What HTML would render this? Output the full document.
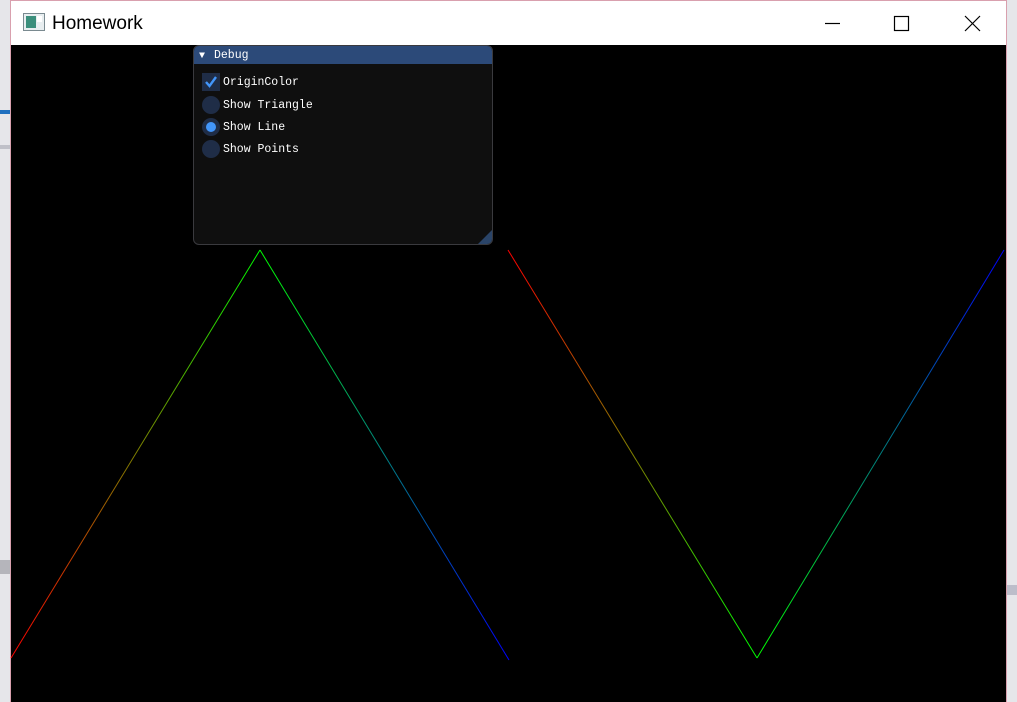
<!DOCTYPE html>
<html><head><style>
html,body{margin:0;padding:0;width:1017px;height:701px;overflow:hidden;background:#e6e6ea;font-family:"Liberation Sans",sans-serif}
.win{position:absolute;left:10px;top:0;width:995px;height:701px;border-left:1px solid #d9a0ae;border-right:1px solid #d9a0ae;border-top:1px solid #d9a0ae;background:#000}
.title{position:absolute;left:0;top:0;width:995px;height:44px;background:#fff}
.title .t{position:absolute;left:41px;top:12px;font-size:19px;color:#000}
.dbg{position:absolute;left:193px;top:45px;width:298px;height:198px;background:#0f0f0f;border:1px solid #3a3a3e;border-radius:6px;overflow:hidden;font-family:"Liberation Mono",monospace;font-size:11.5px;color:#fff}
.hd{height:18px;background:#2c4a79;line-height:20px;padding-left:20px}
.it{position:absolute;left:29px}
.rb{position:absolute;left:8px;width:18px;height:18px;border-radius:50%;background:#1f2d47}
</style></head><body>
<div style="position:absolute;left:0;top:110px;width:10px;height:4px;background:#1f6fbf"></div>
<div style="position:absolute;left:0;top:145px;width:10px;height:4px;background:#bfc0c8"></div>
<div style="position:absolute;left:0;top:560px;width:10px;height:14px;background:#b5b5bb"></div>
<div style="position:absolute;left:1006px;top:585px;width:11px;height:10px;background:#bcbdca"></div>
<div class="win">
<div class="title">
<svg style="position:absolute;left:12px;top:12px" width="22" height="18"><rect x="0.5" y="0.5" width="21" height="17" fill="#e8eef0" stroke="#7a8a90"/><rect x="3" y="3" width="10" height="12" fill="#3b8f7c"/><rect x="14" y="3" width="5" height="6" fill="#fff"/></svg>
<div class="t">Homework</div>
<svg style="position:absolute;left:800px;top:10px" width="195" height="26" fill="none" stroke="#000" stroke-width="1.2"><line x1="14" y1="12.5" x2="29" y2="12.5"/><rect x="83.5" y="5.5" width="14" height="14"/><path d="M154 5 L169 20 M169 5 L154 20"/></svg>
</div>
<svg style="position:absolute;left:-11px;top:-1px" width="1017" height="701">
<defs>
<linearGradient id="a" gradientUnits="userSpaceOnUse" x1="11" y1="658" x2="260" y2="250"><stop offset="0" stop-color="#f00"/><stop offset="1" stop-color="#0f0"/></linearGradient>
<linearGradient id="b" gradientUnits="userSpaceOnUse" x1="260" y1="250" x2="509" y2="660"><stop offset="0" stop-color="#0f0"/><stop offset="1" stop-color="#00f"/></linearGradient>
<linearGradient id="c" gradientUnits="userSpaceOnUse" x1="508" y1="250" x2="757" y2="658"><stop offset="0" stop-color="#f00"/><stop offset="1" stop-color="#0f0"/></linearGradient>
<linearGradient id="d" gradientUnits="userSpaceOnUse" x1="757" y1="658" x2="1004" y2="250"><stop offset="0" stop-color="#0f0"/><stop offset="1" stop-color="#00f"/></linearGradient>
</defs>
<line x1="11" y1="658" x2="260" y2="250" stroke="url(#a)"/>
<line x1="260" y1="250" x2="509" y2="660" stroke="url(#b)"/>
<line x1="508" y1="250" x2="757" y2="658" stroke="url(#c)"/>
<line x1="757" y1="658" x2="1004" y2="250" stroke="url(#d)"/>
</svg>
</div>
<div class="dbg">
<div class="hd"><span style="position:absolute;left:5px;top:1px;font-size:10px">▼</span>Debug</div>
<div style="position:absolute;left:8px;top:27px;width:18px;height:18px;background:#1f2d47"><svg width="18" height="18"><path d="M4 9 L7.5 13 L14 4" stroke="#4296fa" stroke-width="2.4" fill="none"/></svg></div>
<div class="it" style="top:30px">OriginColor</div>
<div class="rb" style="top:50px"></div><div class="it" style="top:53px">Show Triangle</div>
<div class="rb" style="top:72px"><div style="position:absolute;left:4px;top:4px;width:10px;height:10px;border-radius:50%;background:#4296fa"></div></div><div class="it" style="top:75px">Show Line</div>
<div class="rb" style="top:94px"></div><div class="it" style="top:97px">Show Points</div>
<svg style="position:absolute;right:0;bottom:0" width="14" height="14"><path d="M14 0 L14 14 L0 14Z" fill="#2a4468"/></svg>
</div>
</body></html>
